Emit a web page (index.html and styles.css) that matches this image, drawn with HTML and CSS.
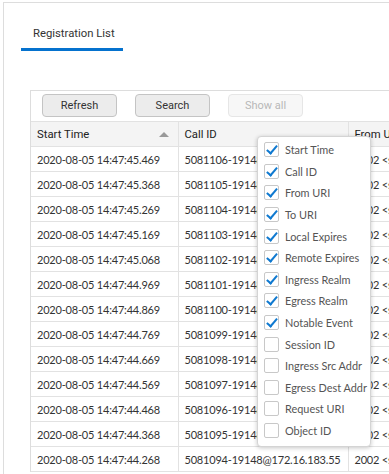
FILE: index.html
```html
<!DOCTYPE html>
<html>
<head>
<meta charset="utf-8">
<link rel="stylesheet" href="styles.css">
</head>
<body>
<div class="page">
  <div class="tabbar">
    <div class="tab">Registration List</div>
  </div>
  <div class="grid">
    <div class="toolbar">
      <button class="btn">Refresh</button>
      <button class="btn">Search</button>
      <button class="btn disabled">Show all</button>
    </div>
    <table class="table">
      <colgroup><col class="c1"><col class="c2"><col class="c3"></colgroup>
      <thead>
        <tr><th><span>Start Time</span><span class="sort"></span></th><th>Call ID</th><th>From URI</th></tr>
      </thead>
      <tbody>
        <tr><td>2020-08-05 14:47:45.469</td><td>5081106-19148@172.16.183.55</td><td>2002 &lt;sip:2002@172.16.183.55&gt;</td></tr>
        <tr><td>2020-08-05 14:47:45.368</td><td>5081105-19148@172.16.183.55</td><td>2002 &lt;sip:2002@172.16.183.55&gt;</td></tr>
        <tr><td>2020-08-05 14:47:45.269</td><td>5081104-19148@172.16.183.55</td><td>2002 &lt;sip:2002@172.16.183.55&gt;</td></tr>
        <tr><td>2020-08-05 14:47:45.169</td><td>5081103-19148@172.16.183.55</td><td>2002 &lt;sip:2002@172.16.183.55&gt;</td></tr>
        <tr><td>2020-08-05 14:47:45.068</td><td>5081102-19148@172.16.183.55</td><td>2002 &lt;sip:2002@172.16.183.55&gt;</td></tr>
        <tr><td>2020-08-05 14:47:44.969</td><td>5081101-19148@172.16.183.55</td><td>2002 &lt;sip:2002@172.16.183.55&gt;</td></tr>
        <tr><td>2020-08-05 14:47:44.869</td><td>5081100-19148@172.16.183.55</td><td>2002 &lt;sip:2002@172.16.183.55&gt;</td></tr>
        <tr><td>2020-08-05 14:47:44.769</td><td>5081099-19148@172.16.183.55</td><td>2002 &lt;sip:2002@172.16.183.55&gt;</td></tr>
        <tr><td>2020-08-05 14:47:44.669</td><td>5081098-19148@172.16.183.55</td><td>2002 &lt;sip:2002@172.16.183.55&gt;</td></tr>
        <tr><td>2020-08-05 14:47:44.569</td><td>5081097-19148@172.16.183.55</td><td>2002 &lt;sip:2002@172.16.183.55&gt;</td></tr>
        <tr><td>2020-08-05 14:47:44.468</td><td>5081096-19148@172.16.183.55</td><td>2002 &lt;sip:2002@172.16.183.55&gt;</td></tr>
        <tr><td>2020-08-05 14:47:44.368</td><td>5081095-19148@172.16.183.55</td><td>2002 &lt;sip:2002@172.16.183.55&gt;</td></tr>
        <tr><td>2020-08-05 14:47:44.268</td><td>5081094-19148@172.16.183.55</td><td>2002 &lt;sip:2002@172.16.183.55&gt;</td></tr>
      </tbody>
    </table>
  </div>
  <div class="menu">
    <label class="item"><span class="box on"></span>Start Time</label>
    <label class="item"><span class="box on"></span>Call ID</label>
    <label class="item"><span class="box on"></span>From URI</label>
    <label class="item"><span class="box on"></span>To URI</label>
    <label class="item"><span class="box on"></span>Local Expires</label>
    <label class="item"><span class="box on"></span>Remote Expires</label>
    <label class="item"><span class="box on"></span>Ingress Realm</label>
    <label class="item"><span class="box on"></span>Egress Realm</label>
    <label class="item"><span class="box on"></span>Notable Event</label>
    <label class="item"><span class="box"></span>Session ID</label>
    <label class="item"><span class="box"></span>Ingress Src Addr</label>
    <label class="item"><span class="box"></span>Egress Dest Addr</label>
    <label class="item"><span class="box"></span>Request URI</label>
    <label class="item"><span class="box"></span>Object ID</label>
  </div>
</div>
</body>
</html>
```

FILE: styles.css
```css
html, body {
  margin: 0;
  padding: 0;
  width: 389px;
  height: 474px;
  overflow: hidden;
  background: #fff;
}
body {
  font-family: "Lato", "Open Sans", sans-serif;
  color: #333;
}
.page {
  position: relative;
  margin: 2px 0 0 3px;
  border-top: 1px solid #ddd;
  border-left: 1px solid #ddd;
  width: 386px;
  height: 471px;
  overflow: hidden;
}
.tabbar {
  display: flex;
  padding: 23px 0 0 17px;
}
.tab {
  width: 102px;
  box-sizing: border-box;
  padding: 0 0 6px 12px;
  font-family: "Roboto", sans-serif;
  font-size: 11.3px;
  line-height: 16px;
  color: #333;
  border-bottom: 3px solid #0572ce;
}
.grid {
  margin: 39px 0 0 26px;
  border-top: 1px solid #ddd;
  border-left: 1px solid #ddd;
  width: 560px;
}
.toolbar {
  display: flex;
  gap: 18px;
  padding: 3px 11px 4px;
}
.btn {
  width: 75px;
  height: 23px;
  box-sizing: border-box;
  border: 1px solid #c4c4c4;
  border-radius: 4px;
  background: #ececec;
  font-family: "Roboto", sans-serif;
  font-size: 11px;
  color: #333;
  padding: 0;
}
.btn.disabled {
  background: #f7f7f7;
  border-color: #e6e6e6;
  color: #b8b8b8;
}
.table {
  border-collapse: collapse;
  table-layout: fixed;
  width: 518px;
}
.c1 { width: 147px; }
.c2 { width: 170px; }
.c3 { width: 201px; }
th {
  height: 24px;
  padding: 0 6px;
  text-align: left;
  font-family: "Roboto", sans-serif;
  font-weight: 400;
  font-size: 11.3px;
  color: #222;
  background: #f4f4f4;
  border-top: 1px solid #e2e2e2;
  border-right: 1px solid #e2e2e2;
  border-bottom: 1px solid #e2e2e2;
  white-space: nowrap;
  overflow: hidden;
}
th:first-child {
  position: relative;
}
.sort {
  position: absolute;
  right: 9px;
  top: 10px;
  width: 0;
  height: 0;
  border-left: 5px solid transparent;
  border-right: 5px solid transparent;
  border-bottom: 5px solid #999;
}
td {
  height: 24px;
  padding: 0 6px;
  font-size: 11px;
  letter-spacing: -0.2px;
  color: #333;
  border-right: 1px solid #e2e2e2;
  border-bottom: 1px solid #e2e2e2;
  white-space: nowrap;
  overflow: hidden;
}
.menu {
  position: absolute;
  left: 253px;
  top: 133px;
  width: 114px;
  height: 311px;
  box-sizing: border-box;
  background: #fff;
  border: 1px solid #d4d4d4;
  border-radius: 4px;
  box-shadow: 0 1px 4px rgba(0, 0, 0, 0.22);
  padding: 2px 0 0 6px;
}
.item {
  display: flex;
  align-items: center;
  gap: 6px;
  height: 21.6px;
  font-size: 10.9px;
  color: #555;
  white-space: nowrap;
}
.box {
  position: relative;
  width: 15px;
  height: 15px;
  box-sizing: border-box;
  border: 1px solid #c8c8c8;
  border-radius: 2px;
  background: #fff;
  flex: none;
}
.box.on::after {
  content: "";
  position: absolute;
  left: 4px;
  top: 0px;
  width: 4px;
  height: 9px;
  border-right: 2.5px solid #0f79d0;
  border-bottom: 2.5px solid #0f79d0;
  transform: rotate(40deg);
}
```
